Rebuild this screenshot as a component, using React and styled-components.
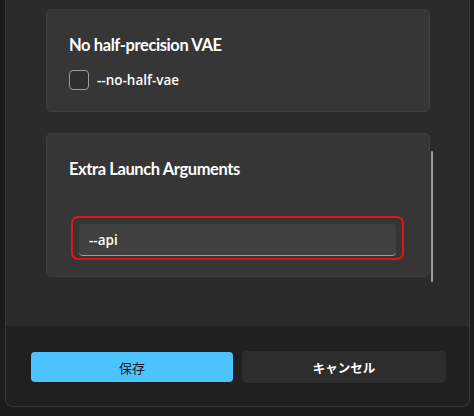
import styled, { createGlobalStyle } from "styled-components";

const GlobalStyle = createGlobalStyle`
  html, body {
    margin: 0;
    padding: 0;
    background: #1c1c1c;
  }
  body {
    font-family: "Open Sans", "Noto Sans", "Noto Sans CJK JP", sans-serif;
    color: #ffffff;
  }
`;

const Dialog = styled.div`
  margin-left: 5px;
  width: 463px;
  height: 406px;
  border: 1px solid #3a3a3a;
  border-top: none;
  border-radius: 0 0 8px 8px;
  background: #2b2b2b;
  display: flex;
  flex-direction: column;
  overflow: hidden;
`;

const Body = styled.div`
  position: relative;
  height: 326px;
  padding: 9px 0 0 40px;
  box-sizing: border-box;
  display: flex;
  flex-direction: column;
  gap: 21px;
`;

const Card = styled.section`
  width: 384px;
  height: ${(p) => p.$h}px;
  box-sizing: border-box;
  background: #363636;
  border: 1px solid #3e3e3e;
  border-radius: 5px;
  padding: 25px 22px 0;
`;

const Title = styled.h3`
  margin: 0;
  font-family: "Lato", "Open Sans", sans-serif;
  font-size: 16.5px;
  line-height: 21px;
  font-weight: 700;
  letter-spacing: -0.4px;
  color: #ffffff;
`;

const CheckRow = styled.label`
  display: flex;
  align-items: center;
  gap: 8px;
  margin-top: 14px;
  font-size: 13.5px;
  font-weight: 600;
`;

const Box = styled.span`
  width: 20px;
  height: 20px;
  box-sizing: border-box;
  border: 1px solid #9c9c9c;
  border-radius: 4px;
  background: #2f2f2f;
`;

const Focus = styled.div`
  margin-top: 36px;
  margin-left: 2px;
  width: 333px;
  height: 44px;
  box-sizing: border-box;
  border: 2px solid #e2141a;
  border-radius: 7px;
  padding: 6px;
`;

const Input = styled.div`
  height: 32px;
  box-sizing: border-box;
  background: #404040;
  border-radius: 4px;
  border-bottom: 1px solid #9a9a9a;
  padding: 0 10px;
  display: flex;
  align-items: center;
  font-size: 13.5px;
  font-weight: 600;
`;

const Thumb = styled.div`
  position: absolute;
  left: 425px;
  top: 151px;
  width: 2px;
  height: 131px;
  border-radius: 1px;
  background: #9e9e9e;
`;

const Footer = styled.footer`
  flex: 1;
  background: #202020;
  display: grid;
  grid-template-columns: 202px 204px;
  gap: 9px;
  padding: 25px 0 0 25px;
  align-items: start;
`;

const Button = styled.button`
  height: ${(p) => (p.$primary ? 30 : 32)}px;
  margin-top: ${(p) => (p.$primary ? 1 : 0)}px;
  border: none;
  border-radius: 4px;
  background: ${(p) => (p.$primary ? "#4cc2ff" : "#2d2d2d")};
  color: ${(p) => (p.$primary ? "#1b1b1b" : "#ffffff")};
  font-family: "Noto Sans CJK JP", sans-serif;
  font-size: ${(p) => (p.$primary ? 13 : 12.5)}px;
  font-weight: ${(p) => (p.$primary ? 400 : 700)};
`;

export default function App() {
  return (
    <>
      <GlobalStyle />
      <Dialog>
        <Body>
          <Card $h={103}>
            <Title>No half-precision VAE</Title>
            <CheckRow>
              <Box />
              --no-half-vae
            </CheckRow>
          </Card>
          <Card $h={144}>
            <Title>Extra Launch Arguments</Title>
            <Focus>
              <Input>--api</Input>
            </Focus>
          </Card>
          <Thumb />
        </Body>
        <Footer>
          <Button $primary>保存</Button>
          <Button>キャンセル</Button>
        </Footer>
      </Dialog>
    </>
  );
}
